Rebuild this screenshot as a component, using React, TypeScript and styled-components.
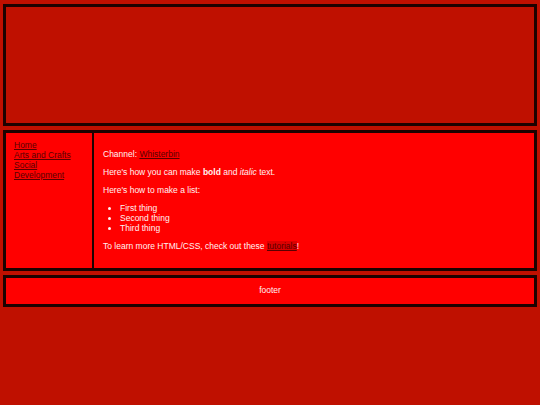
import React from "react";
import styled, { createGlobalStyle } from "styled-components";

const Global = createGlobalStyle`
  *, *::before, *::after {
    box-sizing: border-box;
  }
  html, body {
    margin: 0;
    background: #bf1000;
  }
  body {
    font-family: "Liberation Sans", Arial, sans-serif;
    font-size: 8.5px;
    color: #fff2f2;
  }
`;

const Page = styled.div`
  display: flex;
  flex-direction: column;
  gap: 4px;
  padding: 4px 3px;
`;

const Header = styled.header`
  height: 122px;
  border: 3px solid #1c0200;
  background: #bf1000;
`;

const Middle = styled.div`
  display: flex;
  border: 3px solid #1c0200;
  background: #ff0000;
`;

const Sidebar = styled.nav`
  width: 88px;
  padding: 7px 6px 7px 8px;
  border-right: 2px solid #1c0200;
  display: flex;
  flex-direction: column;
`;

const NavLink = styled.a`
  color: #5a0000;
  text-decoration: underline;
  line-height: 10px;
`;

const Main = styled.main`
  flex: 1;
  padding: 8px 10px 8px 9px;
`;

const P = styled.p`
  margin: 8.5px 0;
  line-height: 9.7px;
`;

const Link = styled.a<{ $shade?: boolean }>`
  color: #5a0000;
  text-decoration: underline;
  background: ${({ $shade }) => ($shade ? "rgba(120,0,0,0.25)" : "transparent")};
`;

const List = styled.ul`
  margin: 8.5px 0;
  padding-left: 17px;
  line-height: 9.7px;
`;

const Footer = styled.footer`
  height: 32px;
  border: 3px solid #1c0200;
  background: #ff0000;
  display: flex;
  align-items: center;
  justify-content: center;
  padding-bottom: 1px;
`;

export default function App() {
  return (
    <>
      <Global />
      <Page>
        <Header />
        <Middle>
          <Sidebar>
            <NavLink href="#">Home</NavLink>
            <NavLink href="#">Arts and Crafts</NavLink>
            <NavLink href="#">Social</NavLink>
            <NavLink href="#">Development</NavLink>
          </Sidebar>
          <Main>
            <P>
              Channel: <Link href="#">Whisterbin</Link>
            </P>
            <P>
              Here's how you can make <b>bold</b> and <i>italic</i> text.
            </P>
            <P>Here's how to make a list:</P>
            <List>
              <li>First thing</li>
              <li>Second thing</li>
              <li>Third thing</li>
            </List>
            <P>
              To learn more HTML/CSS, check out these{" "}
              <Link href="#" $shade>tutorials</Link>!
            </P>
          </Main>
        </Middle>
        <Footer>footer</Footer>
      </Page>
    </>
  );
}
